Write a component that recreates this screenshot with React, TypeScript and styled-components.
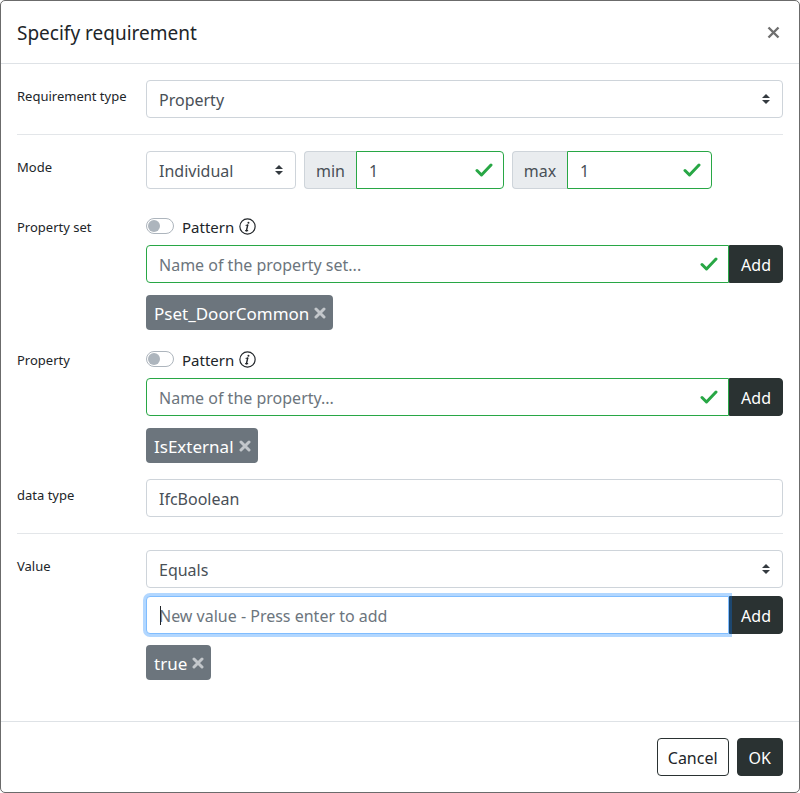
import React from 'react'
import styled, { createGlobalStyle } from 'styled-components'

const GlobalStyle = createGlobalStyle`
  html, body {
    margin: 0;
    padding: 0;
    background: #fff;
  }
  body {
    font-family: "Segoe UI", "Noto Sans", "Liberation Sans", sans-serif;
    color: #212529;
  }
  * { box-sizing: border-box; }
`

const Modal = styled.div`
  width: 800px;
  height: 793px;
  border: 1px solid #6b6b6b;
  border-radius: 5px;
  display: flex;
  flex-direction: column;
  background: #fff;
`

const Header = styled.div`
  height: 63px;
  border-bottom: 1px solid #dee2e6;
  padding: 0 16px;
  display: flex;
  align-items: center;
  justify-content: space-between;
`

const Title = styled.h5`
  margin: 0;
  padding-top: 3px;
  font-size: 19px;
  font-weight: 400;
  line-height: 1.5;
  color: #212529;
`

const CloseButton = styled.button`
  border: 0;
  background: transparent;
  padding: 0;
  width: 20px;
  height: 20px;
  display: flex;
  align-items: center;
  justify-content: center;
  cursor: pointer;
`

const Body = styled.div`
  flex: 1;
  padding: 16px;
`

const Row = styled.div<{ $mb?: number }>`
  display: grid;
  grid-template-columns: 129px 1fr;
  margin-bottom: ${p => (p.$mb ?? 16)}px;
`

const Label = styled.label`
  font-size: 13px;
  line-height: 21px;
  padding-top: 6px;
  color: #212529;
`

const Controls = styled.div<{ $top?: number; $gap?: number }>`
  display: flex;
  flex-direction: column;
  gap: ${p => p.$gap ?? 0}px;
  padding-top: ${p => p.$top ?? 0}px;
  min-width: 0;
`

const Divider = styled.hr`
  border: 0;
  border-top: 1px solid #e3e6e9;
  margin: 0 0 16px 0;
`

const SelectBox = styled.div<{ $width?: number }>`
  position: relative;
  height: 38px;
  width: ${p => (p.$width ? `${p.$width}px` : '100%')};
  border: 1px solid #ced4da;
  border-radius: 4px;
  padding: 2px 28px 0 12px;
  display: flex;
  align-items: center;
  font-size: 16px;
  color: #495057;
  background: #fff;
  flex-shrink: 0;
`

const Arrows = styled.svg`
  position: absolute;
  right: 12px;
  top: 50%;
  transform: translateY(-50%);
`

const InlineRow = styled.div`
  display: flex;
  gap: 8px;
`

const Group = styled.div<{ $width?: number }>`
  display: flex;
  height: 38px;
  width: ${p => (p.$width ? `${p.$width}px` : '100%')};
  flex-shrink: 0;
`

const Addon = styled.div<{ $width: number }>`
  width: ${p => p.$width}px;
  padding-top: 2px;
  background: #e9ecef;
  border: 1px solid #ced4da;
  border-right: 0;
  border-radius: 4px 0 0 4px;
  display: flex;
  align-items: center;
  justify-content: center;
  font-size: 16px;
  color: #495057;
`

const Field = styled.div<{ $state?: 'valid' | 'focus' | 'plain'; $left?: boolean; $right?: boolean }>`
  position: relative;
  flex: 1;
  min-width: 0;
  display: flex;
  align-items: center;
  padding: 2px 40px 0 12px;
  font-size: 16px;
  color: #495057;
  background: #fff;
  border: 1px solid
    ${p => (p.$state === 'valid' ? '#28a745' : p.$state === 'focus' ? '#80bdff' : '#ced4da')};
  border-radius: ${p => `${p.$left ? 0 : 4}px ${p.$right ? 0 : 4}px ${p.$right ? 0 : 4}px ${p.$left ? 0 : 4}px`};
  box-shadow: ${p => (p.$state === 'focus' ? '0 0 0 3px rgba(0, 123, 255, 0.3)' : 'none')};
  z-index: ${p => (p.$state === 'focus' ? 1 : 0)};
`

const Placeholder = styled.span`
  color: #6c757d;
  white-space: nowrap;
`

const Caret = styled.span`
  position: absolute;
  left: 13px;
  top: 9px;
  width: 1px;
  height: 19px;
  background: #212529;
`

const Check = styled.svg`
  position: absolute;
  right: 10px;
  top: 50%;
  transform: translateY(-50%);
`

const DarkButton = styled.button<{ $attached?: boolean }>`
  height: 38px;
  padding: 2px 11px 0;
  border: 1px solid #2a3232;
  background: #2a3232;
  color: #fff;
  font-family: inherit;
  font-size: 16px;
  border-radius: ${p => (p.$attached ? '0 4px 4px 0' : '4px')};
  cursor: pointer;
`

const OutlineButton = styled.button`
  height: 38px;
  padding: 2px 10px 0;
  border: 1px solid #2a3232;
  background: #fff;
  color: #212529;
  font-family: inherit;
  font-size: 16px;
  border-radius: 4px;
  cursor: pointer;
`

const SwitchLine = styled.div`
  height: 24px;
  display: flex;
  align-items: center;
  gap: 8px;
  font-size: 15px;
  color: #212529;
`

const Track = styled.span`
  position: relative;
  width: 28px;
  height: 16px;
  border: 1px solid #adb5bd;
  border-radius: 8px;
  background: #fff;
  &::after {
    content: '';
    position: absolute;
    left: 1px;
    top: 1px;
    width: 12px;
    height: 12px;
    border-radius: 50%;
    background: #adb5bd;
  }
`

const PatternText = styled.span`
  display: flex;
  align-items: center;
  gap: 5px;
  padding-top: 1px;
`

const Tags = styled.div<{ $top: number }>`
  display: flex;
  margin-top: ${p => p.$top}px;
`

const Tag = styled.span`
  display: inline-flex;
  align-items: center;
  gap: 5px;
  height: 35px;
  padding: 1px 7px 0 8px;
  background: #6c757d;
  color: #fff;
  border-radius: 4px;
  font-size: 17px;
`

const Footer = styled.div`
  border-top: 1px solid #dee2e6;
  padding: 16px;
  display: flex;
  justify-content: flex-end;
  gap: 8px;
`

function SelectArrows() {
  return (
    <Arrows width="8" height="10" viewBox="0 0 8 10">
      <path d="M4 0 L8 4 H0 Z M4 10 L0 6 H8 Z" fill="#343a40" />
    </Arrows>
  )
}

function CheckMark() {
  return (
    <Check width="18" height="15" viewBox="0 0 18 15">
      <path d="M2 8 L6.5 12.5 L16 2.5" fill="none" stroke="#28a745" strokeWidth="3" strokeLinecap="round" strokeLinejoin="round" />
    </Check>
  )
}

function InfoIcon() {
  return (
    <svg width="17" height="17" viewBox="0 0 16 16">
      <circle cx="8" cy="8" r="7.2" fill="none" stroke="#212529" strokeWidth="1.1" />
      <circle cx="8.9" cy="4.4" r="0.95" fill="#212529" />
      <path d="M8.2 6.6 L7 12" stroke="#212529" strokeWidth="1.3" strokeLinecap="round" />
      <path d="M6.6 6.8 H8.2 M6.2 11.9 H8.2" stroke="#212529" strokeWidth="1" strokeLinecap="round" />
    </svg>
  )
}

function RemoveIcon() {
  return (
    <svg width="12" height="12" viewBox="0 0 12 12">
      <path d="M2 2 L10 10 M10 2 L2 10" stroke="#c3c7cb" strokeWidth="3" strokeLinecap="round" />
    </svg>
  )
}

function PatternSwitch() {
  return (
    <SwitchLine>
      <Track />
      <PatternText>
        Pattern <InfoIcon />
      </PatternText>
    </SwitchLine>
  )
}

export default function App() {
  return (
    <>
      <GlobalStyle />
      <Modal>
        <Header>
          <Title>Specify requirement</Title>
          <CloseButton aria-label="Close">
            <svg width="13" height="13" viewBox="0 0 13 13">
              <path d="M1.5 1.5 L11.5 11.5 M11.5 1.5 L1.5 11.5" stroke="#6f6f6f" strokeWidth="2.4" />
            </svg>
          </CloseButton>
        </Header>

        <Body>
          <Row>
            <Label>Requirement type</Label>
            <Controls>
              <SelectBox>
                Property
                <SelectArrows />
              </SelectBox>
            </Controls>
          </Row>
          <Divider />

          <Row $mb={22}>
            <Label>Mode</Label>
            <InlineRow>
              <SelectBox $width={150}>
                Individual
                <SelectArrows />
              </SelectBox>
              <Group $width={200}>
                <Addon $width={52}>min</Addon>
                <Field $state="valid" $left>
                  1
                  <CheckMark />
                </Field>
              </Group>
              <Group $width={200}>
                <Addon $width={55}>max</Addon>
                <Field $state="valid" $left>
                  1
                  <CheckMark />
                </Field>
              </Group>
            </InlineRow>
          </Row>

          <Row $mb={14}>
            <Label>Property set</Label>
            <Controls $top={3} $gap={7}>
              <PatternSwitch />
              <Group>
                <Field $state="valid" $right>
                  <Placeholder>Name of the property set...</Placeholder>
                  <CheckMark />
                </Field>
                <DarkButton $attached>Add</DarkButton>
              </Group>
              <Tags $top={5}>
                <Tag>
                  Pset_DoorCommon <RemoveIcon />
                </Tag>
              </Tags>
            </Controls>
          </Row>

          <Row>
            <Label>Property</Label>
            <Controls $top={3} $gap={7}>
              <PatternSwitch />
              <Group>
                <Field $state="valid" $right>
                  <Placeholder>Name of the property...</Placeholder>
                  <CheckMark />
                </Field>
                <DarkButton $attached>Add</DarkButton>
              </Group>
              <Tags $top={5}>
                <Tag>
                  IsExternal <RemoveIcon />
                </Tag>
              </Tags>
            </Controls>
          </Row>

          <Row>
            <Label>data type</Label>
            <Controls>
              <Group>
                <Field>IfcBoolean</Field>
              </Group>
            </Controls>
          </Row>
          <Divider />

          <Row>
            <Label>Value</Label>
            <Controls $gap={8}>
              <SelectBox>
                Equals
                <SelectArrows />
              </SelectBox>
              <Group>
                <Field $state="focus" $right>
                  <Caret />
                  <Placeholder>New value - Press enter to add</Placeholder>
                </Field>
                <DarkButton $attached>Add</DarkButton>
              </Group>
              <Tags $top={3}>
                <Tag>
                  true <RemoveIcon />
                </Tag>
              </Tags>
            </Controls>
          </Row>
        </Body>

        <Footer>
          <OutlineButton>Cancel</OutlineButton>
          <DarkButton>OK</DarkButton>
        </Footer>
      </Modal>
    </>
  )
}
